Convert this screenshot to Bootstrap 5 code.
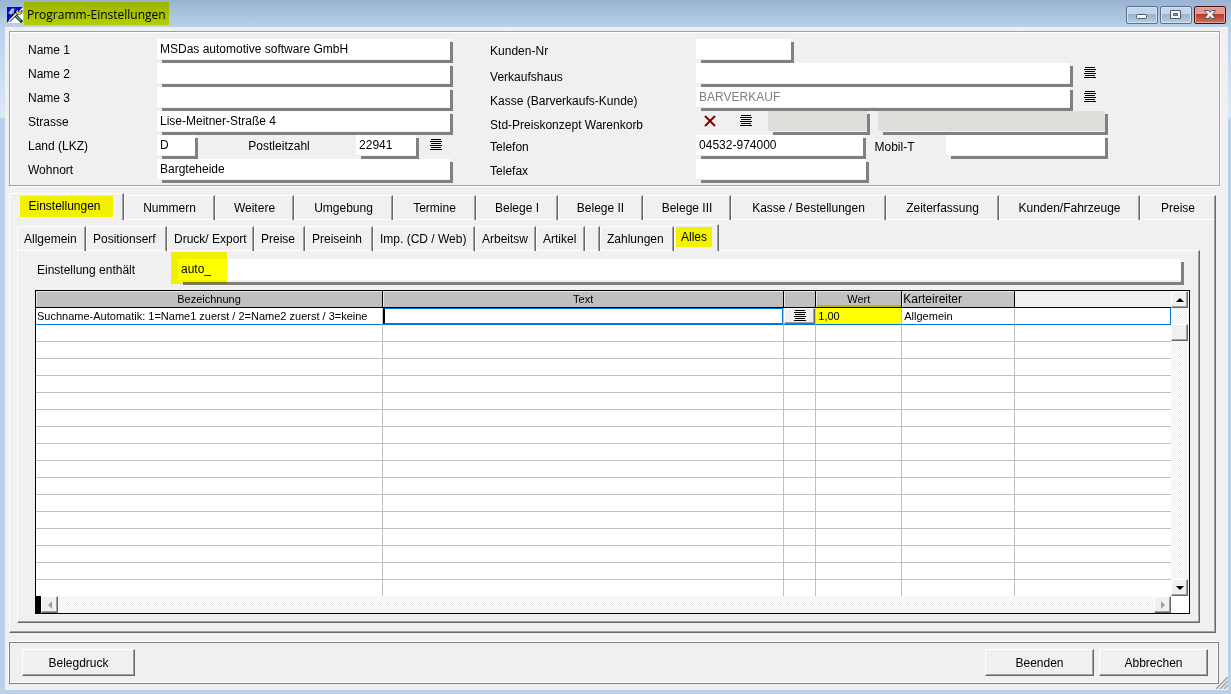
<!DOCTYPE html>
<html lang="de">
<head>
<meta charset="utf-8">
<meta name="viewport" content="width=device-width, initial-scale=1">
<title>Programm-Einstellungen</title>
<link href="https://cdn.jsdelivr.net/npm/bootstrap@5.3.0/dist/css/bootstrap.min.css" rel="stylesheet">
<style>
:root { --face:#f0f0f0; --shade:#a0a0a0; --dark:#696969; --bar:#808080; --frame:#b9d1ea; }
body { font:12px/16px "Liberation Sans", Arial, sans-serif; color:#000; background:var(--frame); }
button, input { font:inherit; color:inherit; border-radius:0; }
.app-window { padding:0 3px 4px 5px; background:linear-gradient(#98b4d2, #b9d1ea 27px, #dce8f6 117px, #b9d1ea 119px); }
.title-bar { height:27px; padding:2px 2px 0; }
.title-icon { margin:5px 1px 0 0; }
.title-text { padding:0 3px; height:23px; font:12px/26px "Open Sans", sans-serif; background:linear-gradient(#9cb500, #b3cf00); }
.win-btns { gap:2px; }
.win-btn { width:32px; height:18px; padding:0; border:1px solid #5c6f8c; border-radius:2px; box-shadow:inset 0 0 0 1px #d5e3f1; background:linear-gradient(#c2d5e9 45%, #98b3d0 45%, #b4cde6); }
.win-btn.win-close { border-color:#4d0d13; box-shadow:inset 0 0 0 1px #e6a79c; background:linear-gradient(#e59c90 45%, #b83a26 45%, #d4705c); }
.client-area { background:var(--face); padding:4px 8px 5px 4px; }
.etched { border:1px solid var(--shade); box-shadow:1px 1px 0 #fff, inset 1px 1px 0 #fff; padding:7px 0 2px 18px; }
.col-left { flex:0 0 38.8%; padding-right:37px; }
.col-right { flex:1 1 0; min-width:0; padding-right:111px; }
.field-row { height:24px; }
.cap { padding-top:4px; flex:none; white-space:nowrap; }
.cap-left { width:129px; padding-top:3px; }
.cap-right { width:206px; }
.cap-low { padding-top:6px; }
.cap-mobil { width:72px; }
.fld { --fill:#fff; border:0; outline:0; height:24px; padding:0 6px 4px 3px; min-width:0;
  background:
   linear-gradient(var(--fill),var(--fill)) left top / calc(100% - 3px) 20px no-repeat,
   linear-gradient(var(--bar),var(--bar)) right bottom / calc(100% - 5px) 3px no-repeat,
   linear-gradient(var(--bar),var(--bar)) right bottom / 3px calc(100% - 3px) no-repeat; }
.fld:disabled { --fill:#dfdeda; }
.fld-muted { color:#808080; }
.w-land { width:41px; } .w-plz { width:63px; } .w-nr { width:98px; } .w-tel { width:173px; } .w-code { width:102px; } .w-name { width:377px; }
.icon-btn { border:0; padding:4px 0 0; background:none; display:flex; line-height:0; }
.pick { margin:0 11px; }
.tab-btn { border:0; background:var(--face); padding:0 0 1px; white-space:nowrap; border-top:1px solid #fff; border-left:1px solid #fff; border-right:1px solid var(--dark); box-shadow:inset -1px 0 0 var(--shade), inset 0 -1px 0 #fff; border-top-left-radius:3px; text-align:center; }
.tab-btn.current { margin-top:-2px; padding-bottom:2px; box-shadow:inset -1px 0 0 var(--shade); }
.tab-btn span { display:inline-block; }
.tabs-main { display:grid; grid-template-columns:115fr 91fr 79fr 99fr 83fr 82fr 85fr 88fr 155fr 113fr 141fr 76fr; height:25px; margin:9px 4px 0 0; }
.tabs-sub { display:grid; grid-template-columns:69px 81px 87px 51px 68px 102px 61px 49px 15px 74px 45px; height:25px; }
.tabs-sub .tab-btn { text-align:left; padding-left:6px; }
.tabs-sub .tab-btn.current { padding-left:1px; }
.tabs-sub + .sheet-sub { border-top:1px solid #fff; margin-top:-1px; }
.marked { background:#f2f200; }
.tabs-main .marked { padding:3px 12px 3px 8px; line-height:15px; }
.tabs-sub .marked { padding:3px 5px; line-height:14px; }
.sheet { border-left:1px solid #fff; border-right:1px solid var(--dark); border-bottom:1px solid var(--dark); box-shadow:inset -1px -1px 0 var(--shade); }
.sheet-main { padding:6px 15px 9px 7px; margin-right:4px; }
.sheet-sub { padding:8px 9px 8px 17px; }
.search-row { height:31px; padding-right:6px; padding-left:2px; }
.search-row .cap { width:141px; padding-top:3px; }
.search-box { position:relative; }
.search-box .fld { height:26px; background-size:calc(100% - 3px) 21px, calc(100% - 5px) 3px, 3px calc(100% - 3px); padding-bottom:7px; }
.search-box::after { content:""; position:absolute; left:-7px; top:-7px; width:56px; height:32px; background:#ff0; mix-blend-mode:multiply; pointer-events:none; }
.grid-box { border:1px solid #000; background:#fff; }
.data-grid { table-layout:fixed; width:100%; border-collapse:separate; border-spacing:0; font-size:11px; line-height:15px; }
.c-name { width:347px; } .c-pick { width:32px; } .c-wert { width:86px; } .c-tab { width:113px; } .c-rest { width:156px; }
.data-grid th { height:17px; padding:0; font-weight:400; text-align:center; background:#c0c0c0; border-right:1px solid #000; border-bottom:1px solid #000; box-shadow:inset 1px 1px 0 #e6e6e6; line-height:16px; }
.data-grid th.head-left { text-align:left; padding-left:1px; font-size:12px; background:#c4c4c4; }
.data-grid th:last-child { background:var(--face); border-right:0; box-shadow:none; }
.data-grid th.wert { box-shadow:inset 1px 1px 0 #e6e6e6, inset 0 -2px 0 #bfb800; }
.data-grid td { height:17px; padding:0 2px; border-right:1px solid #c0c0c0; border-bottom:1px solid #c0c0c0; white-space:nowrap; overflow:hidden; }
.data-grid td:first-child { padding:0 1px; }
.data-grid td:last-child { border-right:0; }
.data-grid tr:last-child td { border-bottom:0; height:16px; }
.data-grid tr.active-row td { border-bottom-color:#0a78d0; }
.data-grid tr.active-row td:last-child { border-right:1px solid #0a78d0; }
.data-grid td.edit-cell { padding:0; }
.data-grid td.hit { background:#ff0; }
.cell-input { display:block; width:100%; height:16px; border:1px solid #0a78d0; border-left:2px solid #000; outline:0; padding:0; }
.raised { background:var(--face); border:1px solid; border-color:#fff var(--dark) var(--dark) #fff; box-shadow:inset -1px -1px 0 var(--shade); padding:0; }
.cell-btn { display:flex; width:100%; height:16px; align-items:center; justify-content:center; }
.track { background:repeating-conic-gradient(#ededed 0 25%, #fff 0 50%) 0 0 / 2px 2px; }
.sb-btn { width:17px; height:17px; flex:none; display:flex; align-items:center; justify-content:center; }
.v-bar { width:18px; }
.h-bar { height:17px; border-left:5px solid #000; padding-right:18px; background-clip:content-box; }
.foot { border:1px solid var(--bar); box-shadow:-1px -1px 0 #fff, inset -1px -1px 0 #fff; padding:6px 10px 7px 12px; margin-top:9px; margin-right:1px; gap:5px; }
.push { height:27px; width:109px; }
.push.wide { width:113px; }
.grip { position:absolute; right:0; bottom:1px; }
</style>
</head>
<body>
<svg width="0" height="0" class="position-absolute">
  <symbol id="lines" viewBox="0 0 12 12"><path d="M1 0h10v1H1zM0 2h12v1H0zM1 4h10v1H1zM0 6h12v1H0zM1 8h10v1H1zM0 10h12v1H0z"/></symbol>
</svg>
<div class="app-window min-vh-100 d-flex flex-column">
  <header class="title-bar d-flex align-items-start">
    <svg width="16" height="16" viewBox="0 0 16 16" class="title-icon" aria-hidden="true">
      <path fill="#fff" d="M0 0h16v16H0z"/><path fill="#00f" d="M0 0h16L0 16z"/>
      <path d="M5 5l10 10" stroke="#000" stroke-width="3"/><path d="M5 5l9 9" stroke="#6bb" stroke-width="1.4"/>
      <path d="M2 14l9-9" stroke="#000" stroke-width="3"/><path d="M2 14l9-9" stroke="#fff" stroke-width="1.6"/>
      <path d="M1 6l4-5 4 1-2 1v2L4 8z" fill="#9cc8d8" stroke="#134" stroke-width=".5"/>
      <path d="M11 2v3h3l1-2v3l-3 2-3-2V4z" fill="#ee6" stroke="#000" stroke-width=".6"/>
    </svg>
    <div class="title-text">Programm-Einstellungen</div>
    <div class="win-btns d-flex ms-auto pt-1">
      <button class="win-btn" aria-label="Minimieren"><svg width="30" height="16" class="d-block"><rect x="9.5" y="7.5" width="10" height="4" rx="1" fill="#f5f5f5" stroke="#50586c"/></svg></button>
      <button class="win-btn" aria-label="Maximieren"><svg width="30" height="16" class="d-block"><path d="M9.500 3.500h10v8h-10z" fill="#f5f5f5" stroke="#50586c"/><path d="M12.500 6.500h4v2h-4z" fill="#9ab4d0" stroke="#50586c"/></svg></button>
      <button class="win-btn win-close" aria-label="Schließen"><svg width="30" height="16" class="d-block"><path d="M9.500 3.500h4l1.500 2 1.500-2h4l-3 4 3 4h-4L15 9.500l-1.500 2h-4l3-4z" fill="#f5f5f5" stroke="#50586c"/></svg></button>
    </div>
  </header>

  <main class="client-area flex-grow-1 position-relative">
    <section class="etched d-flex">
      <div class="col-left">
        <div class="field-row d-flex"><label class="cap cap-left" for="n1">Name 1</label><input class="fld flex-grow-1" id="n1" value="MSDas automotive software GmbH"></div>
        <div class="field-row d-flex"><label class="cap cap-left" for="n2">Name 2</label><input class="fld flex-grow-1" id="n2"></div>
        <div class="field-row d-flex"><label class="cap cap-left" for="n3">Name 3</label><input class="fld flex-grow-1" id="n3"></div>
        <div class="field-row d-flex"><label class="cap cap-left" for="st">Strasse</label><input class="fld flex-grow-1" id="st" value="Lise-Meitner-Straße 4"></div>
        <div class="field-row d-flex"><label class="cap cap-left" for="la">Land (LKZ)</label><input class="fld w-land" id="la" value="D">
          <label class="cap cap-left w-auto mx-auto ps-1" for="plz">Postleitzahl</label><input class="fld w-plz" id="plz" value="22941">
          <button class="icon-btn pick" aria-label="Auswahl"><svg width="12" height="12"><use href="#lines"/></svg></button></div>
        <div class="field-row d-flex"><label class="cap cap-left" for="wo">Wohnort</label><input class="fld flex-grow-1" id="wo" value="Bargteheide"></div>
      </div>
      <div class="col-right">
        <div class="field-row d-flex"><label class="cap cap-right" for="kn">Kunden-Nr</label><input class="fld w-nr" id="kn"></div>
        <div class="field-row d-flex"><label class="cap cap-right cap-low" for="vh">Verkaufshaus</label><input class="fld w-name" id="vh">
          <button class="icon-btn pick" aria-label="Auswahl"><svg width="12" height="12"><use href="#lines"/></svg></button></div>
        <div class="field-row d-flex"><label class="cap cap-right cap-low" for="ka">Kasse (Barverkaufs-Kunde)</label><input class="fld fld-muted w-name" id="ka" value="BARVERKAUF">
          <button class="icon-btn pick" aria-label="Auswahl"><svg width="12" height="12"><use href="#lines"/></svg></button></div>
        <div class="field-row d-flex"><label class="cap cap-right cap-low" for="sp">Std-Preiskonzept Warenkorb</label>
          <button class="icon-btn ms-2" aria-label="Löschen"><svg width="12" height="12"><path d="M1 1l10 10M11 1L1 11" stroke="#800000" stroke-width="2"/></svg></button>
          <button class="icon-btn ms-4" aria-label="Auswahl"><svg width="12" height="12"><use href="#lines"/></svg></button>
          <input class="fld w-code ms-3" id="sp" disabled><input class="fld flex-grow-1 ms-2" aria-label="Preiskonzept Bezeichnung" disabled></div>
        <div class="field-row d-flex"><label class="cap cap-right" for="te">Telefon</label><input class="fld w-tel" id="te" value="04532-974000">
          <label class="cap cap-mobil ms-2" for="mo">Mobil-T</label><input class="fld flex-grow-1" id="mo"></div>
        <div class="field-row d-flex"><label class="cap cap-right" for="fa">Telefax</label><input class="fld w-tel" id="fa"></div>
      </div>
    </section>

    <nav class="tabs-main" aria-label="Bereiche">
      <button class="tab-btn current"><span class="marked">Einstellungen</span></button><button class="tab-btn">Nummern</button><button class="tab-btn">Weitere</button><button class="tab-btn">Umgebung</button><button class="tab-btn">Termine</button><button class="tab-btn">Belege I</button><button class="tab-btn">Belege II</button><button class="tab-btn">Belege III</button><button class="tab-btn">Kasse / Bestellungen</button><button class="tab-btn">Zeiterfassung</button><button class="tab-btn">Kunden/Fahrzeuge</button><button class="tab-btn">Preise</button>
    </nav>
    <section class="sheet sheet-main">
      <nav class="tabs-sub" aria-label="Seiten">
        <button class="tab-btn">Allgemein</button><button class="tab-btn">Positionserf</button><button class="tab-btn">Druck/ Export</button><button class="tab-btn">Preise</button><button class="tab-btn">Preiseinh</button><button class="tab-btn">Imp. (CD / Web)</button><button class="tab-btn">Arbeitsw</button><button class="tab-btn">Artikel</button><button class="tab-btn" aria-label="Leer"></button><button class="tab-btn">Zahlungen</button><button class="tab-btn current"><span class="marked">Alles</span></button>
      </nav>
      <div class="sheet sheet-sub">
        <div class="search-row d-flex"><label class="cap" for="se">Einstellung enthält</label><div class="search-box flex-grow-1"><input class="fld w-100" id="se" value="auto_"></div></div>
        <div class="grid-box">
          <div class="d-flex">
            <table class="data-grid flex-grow-1">
              <colgroup><col class="c-name"><col><col class="c-pick"><col class="c-wert"><col class="c-tab"><col class="c-rest"></colgroup>
              <thead><tr><th>Bezeichnung</th><th>Text</th><th></th><th class="wert">Wert</th><th class="head-left">Karteireiter</th><th></th></tr></thead>
              <tbody id="rows">
                <tr class="active-row"><td>Suchname-Automatik: 1=Name1 zuerst / 2=Name2 zuerst / 3=keine</td><td class="edit-cell"><input class="cell-input" aria-label="Text"></td><td class="edit-cell"><button class="raised cell-btn" aria-label="Auswahl"><svg width="12" height="12"><use href="#lines"/></svg></button></td><td class="hit">1,00</td><td>Allgemein</td><td></td></tr>
              </tbody>
            </table>
            <div class="v-bar track d-flex flex-column">
              <button class="raised sb-btn" aria-label="Nach oben"><svg width="8" height="4"><path d="M0 4l4-4 4 4z"/></svg></button>
              <div class="raised sb-btn mt-3"></div>
              <button class="raised sb-btn mt-auto" aria-label="Nach unten"><svg width="8" height="4"><path d="M0 0l4 4 4-4z"/></svg></button>
            </div>
          </div>
          <div class="h-bar track d-flex justify-content-between">
            <button class="raised sb-btn" aria-label="Nach links"><svg width="4" height="8"><path d="M4 0L0 4l4 4z" fill="#a0a0a0"/></svg></button>
            <button class="raised sb-btn" aria-label="Nach rechts"><svg width="4" height="8"><path d="M0 0l4 4-4 4z" fill="#a0a0a0"/></svg></button>
          </div>
        </div>
      </div>
    </section>

    <footer class="foot d-flex">
      <button class="raised push wide">Belegdruck</button>
      <button class="raised push ms-auto">Beenden</button>
      <button class="raised push">Abbrechen</button>
    </footer>
    <svg class="grip" width="12" height="12"><path d="M0 12L12 0M4 12l8-8M8 12l4-4" stroke="#a0a0a0" stroke-width="1.5"/></svg>
  </main>
</div>
<script src="https://cdn.jsdelivr.net/npm/bootstrap@5.3.0/dist/js/bootstrap.bundle.min.js"></script>
<script>
  // Fill the grid with its empty rows.
  document.getElementById('rows').insertAdjacentHTML('beforeend',
    ('<tr>' + '<td></td>'.repeat(6) + '</tr>').repeat(16));
</script>
</body>
</html>
